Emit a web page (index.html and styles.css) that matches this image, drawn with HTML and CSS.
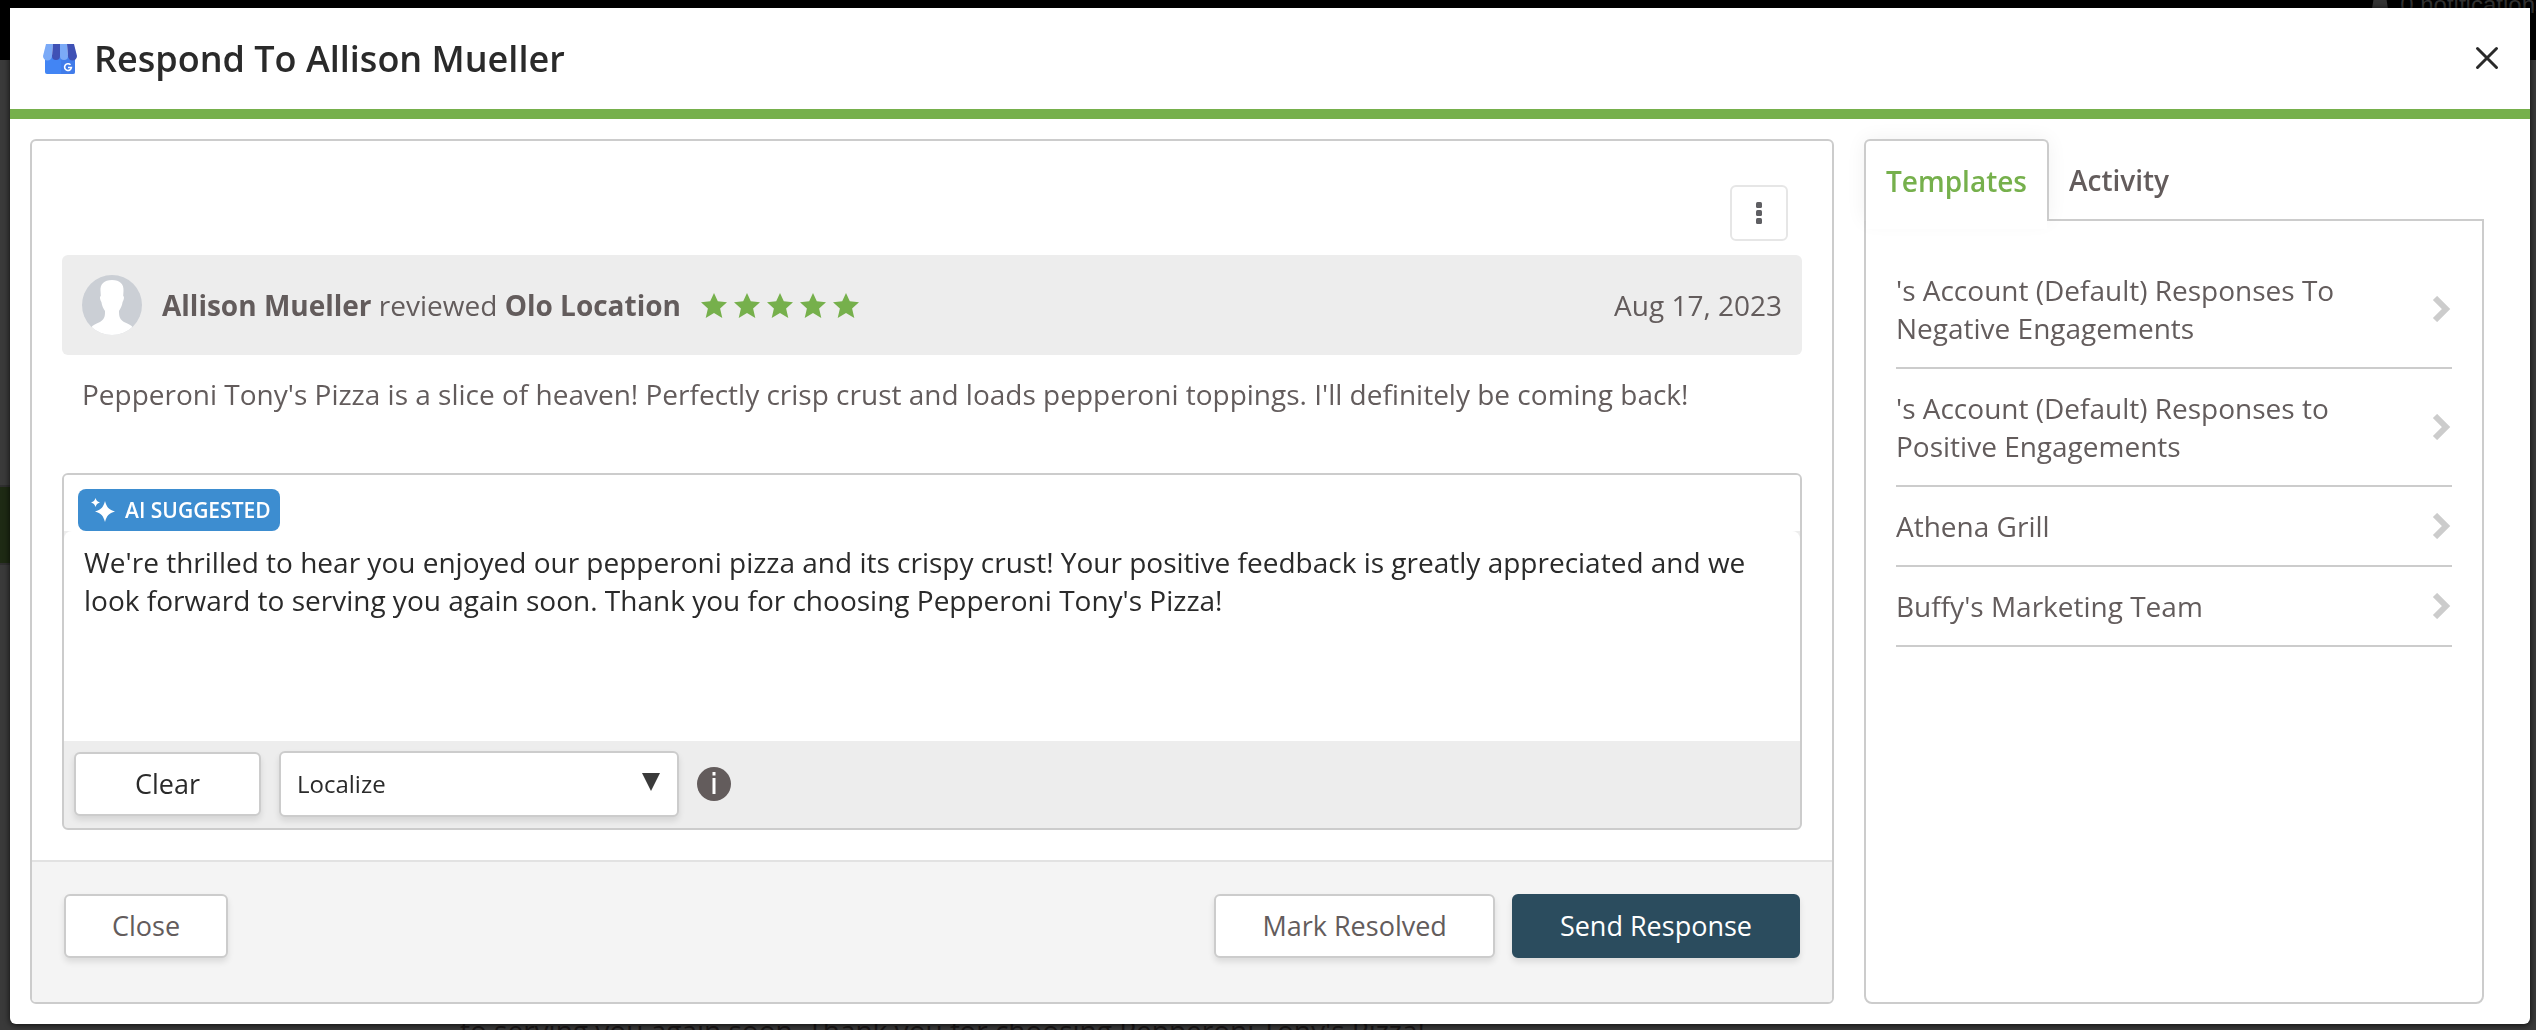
FILE: index.html
```html
<!DOCTYPE html>
<html lang="en">
<head>
<meta charset="utf-8">
<meta name="viewport" content="width=device-width, initial-scale=1">
<title>Respond To Allison Mueller</title>
<link rel="stylesheet" href="styles.css">
</head>
<body>
<div class="backdrop" aria-hidden="true">
  <div class="backdrop-bar"><svg class="bell" viewBox="0 0 18 16"><path d="M3 0h12l2 13H1z"/></svg><span>0 notifications</span></div>
  <div class="backdrop-accent"></div>
  <p class="backdrop-text">to serving you again soon. Thank you for choosing Pepperoni Tony's Pizza!</p>
</div>

<main class="modal" role="dialog" aria-labelledby="dialog-title">
  <header class="modal-header">
    <svg class="store-icon" viewBox="0 0 34 30" aria-hidden="true">
      <path fill="#4285f4" d="M2 11h30v17a2 2 0 0 1-2 2H4a2 2 0 0 1-2-2z"/>
      <path fill="#3f74e0" d="M18 15h14v13a2 2 0 0 1-2 2H18z" opacity=".5"/>
      <path fill="#7baaf7" d="M3 0h7L9 12a4.500 4.500 0 0 1-9 0z"/>
      <path fill="#3f51b5" d="M10 0h7v12a4 4 0 0 1-8 0z"/>
      <path fill="#7baaf7" d="M17 0h7l1 12a4 4 0 0 1-8 0z"/>
      <path fill="#3f51b5" d="M24 0h7l3 12a4.500 4.500 0 0 1-9 0z"/>
      <path fill="none" stroke="#fff" stroke-width="1.600" d="M27.500 20.800a3.400 3.400 0 1 0 .9 2.700H25"/>
    </svg>
    <h1 class="modal-title" id="dialog-title">Respond To Allison Mueller</h1>
    <button class="icon-close" type="button" aria-label="Close dialog">
      <svg viewBox="0 0 24 24" aria-hidden="true"><path d="M2.500 2.500l19 19M21.500 2.500l-19 19"/></svg>
    </button>
  </header>

  <div class="modal-body">
    <section class="review">
      <div class="review-main">
        <div class="review-tools">
          <button class="kebab" type="button" aria-label="More options">
            <svg viewBox="0 0 6 22" aria-hidden="true"><rect width="6" height="6" rx="1.500"/><rect y="8" width="6" height="6" rx="1.500"/><rect y="16" width="6" height="6" rx="1.500"/></svg>
          </button>
        </div>
        <div class="review-header">
          <svg class="avatar" viewBox="0 0 60 60" aria-hidden="true">
            <defs><clipPath id="round"><circle cx="30" cy="30" r="30"/></clipPath></defs>
            <g clip-path="url(#round)">
              <rect width="60" height="60" fill="#cbcfd5"/>
              <path fill="#fff" d="M30 5c8 0 12 4 11.500 11l-.3 5c1.200.3 1 3.500-.6 6-.6 4-2 6.500-3.600 9 0 6 1 8.500 5 11 4 2 7 3 9 5.500V60H9v-7.500c2-2.500 5-3.500 9-5.500 4-2.500 5.200-5 5-11-1.800-2.500-3-5-3.600-9-1.600-2.500-1.800-5.700-.6-6l-.3-5C18 9 22 5 30 5z"/>
            </g>
          </svg>
          <p class="byline"><strong>Allison Mueller</strong> reviewed <strong>Olo Location</strong></p>
          <div class="stars" role="img" aria-label="5 out of 5 stars">
            <svg viewBox="0 0 26 25"><path d="M13 0l3.800 8.300 9.200.9-6.900 6.300 2.200 9.500-8.300-5-8.300 5 2.200-9.500L0 9.200l9.200-.9z"/></svg>
            <svg viewBox="0 0 26 25"><path d="M13 0l3.800 8.300 9.200.9-6.900 6.300 2.200 9.500-8.300-5-8.300 5 2.200-9.500L0 9.200l9.200-.9z"/></svg>
            <svg viewBox="0 0 26 25"><path d="M13 0l3.800 8.300 9.200.9-6.900 6.300 2.200 9.500-8.300-5-8.300 5 2.200-9.500L0 9.200l9.200-.9z"/></svg>
            <svg viewBox="0 0 26 25"><path d="M13 0l3.800 8.300 9.200.9-6.900 6.300 2.200 9.500-8.300-5-8.300 5 2.200-9.500L0 9.200l9.200-.9z"/></svg>
            <svg viewBox="0 0 26 25"><path d="M13 0l3.800 8.300 9.200.9-6.900 6.300 2.200 9.500-8.300-5-8.300 5 2.200-9.500L0 9.200l9.200-.9z"/></svg>
          </div>
          <time class="date" datetime="2023-08-17">Aug 17, 2023</time>
        </div>
        <p class="review-text">Pepperoni Tony's Pizza is a slice of heaven! Perfectly crisp crust and loads pepperoni toppings. I'll definitely be coming back!</p>

        <div class="editor">
          <div class="editor-top">
            <span class="ai-badge">
              <svg viewBox="0 0 24 24" aria-hidden="true"><path d="M14 3c1.800 6.500 3.800 8.600 10 10.500C17.800 15.400 15.800 17.500 14 24c-1.800-6.500-3.800-8.600-10-10.500C10.200 11.600 12.200 9.500 14 3z"/><path d="M4.500 0c1 2.800 1.700 3.500 4.500 4.500C6.200 5.500 5.500 6.200 4.500 9 3.500 6.200 2.800 5.500 0 4.500 2.800 3.500 3.500 2.800 4.500 0z"/></svg>
              AI SUGGESTED
            </span>
          </div>
          <textarea class="reply" aria-label="Response" spellcheck="false">We're thrilled to hear you enjoyed our pepperoni pizza and its crispy crust! Your positive feedback is greatly appreciated and we look forward to serving you again soon. Thank you for choosing Pepperoni Tony's Pizza!</textarea>
          <div class="editor-bar">
            <button class="btn btn-clear" type="button">Clear</button>
            <div class="select-wrap">
              <select class="select" aria-label="Localize"><option>Localize</option></select>
              <svg class="caret" viewBox="0 0 18 18" aria-hidden="true"><path d="M0 0h18L9 18z"/></svg>
            </div>
            <svg class="info" viewBox="0 0 34 34" role="img" aria-label="Information"><circle cx="17" cy="17" r="17" fill="#635c5c"/><path fill="#fff" d="M15.500 5h3v3.500h-3zM15.500 11h3v16h-3z"/></svg>
          </div>
        </div>
      </div>
      <footer class="review-footer">
        <button class="btn btn-close" type="button">Close</button>
        <div class="footer-actions">
          <button class="btn" type="button">Mark Resolved</button>
          <button class="btn btn-primary" type="button">Send Response</button>
        </div>
      </footer>
    </section>

    <aside class="sidebar">
      <div class="tabs" role="tablist">
        <button class="tab tab-active" type="button" role="tab" aria-selected="true">Templates</button>
        <button class="tab" type="button" role="tab" aria-selected="false">Activity</button>
      </div>
      <div class="tab-panel" role="tabpanel">
        <ul class="templates">
          <li><a class="template" href="#negative"><span>'s Account (Default) Responses To Negative Engagements</span><svg class="chevron" viewBox="0 0 20 26" aria-hidden="true"><path d="M3 2l11 11L3 24"/></svg></a></li>
          <li><a class="template" href="#positive"><span>'s Account (Default) Responses to Positive Engagements</span><svg class="chevron" viewBox="0 0 20 26" aria-hidden="true"><path d="M3 2l11 11L3 24"/></svg></a></li>
          <li><a class="template" href="#athena"><span>Athena Grill</span><svg class="chevron" viewBox="0 0 20 26" aria-hidden="true"><path d="M3 2l11 11L3 24"/></svg></a></li>
          <li><a class="template" href="#buffy"><span>Buffy's Marketing Team</span><svg class="chevron" viewBox="0 0 20 26" aria-hidden="true"><path d="M3 2l11 11L3 24"/></svg></a></li>
        </ul>
      </div>
    </aside>
  </div>
</main>
</body>
</html>
```
FILE: styles.css
```css
* { box-sizing: border-box; }

body {
  margin: 0;
  min-height: 100vh;
  display: flex;
  padding: 8px 6px 6px 10px;
  background: #3a3a3a;
  color: #635c5c;
  font: 28px/38px "Open Sans", "Noto Sans", sans-serif;
}

h1, p, ul { margin: 0; padding: 0; }
ul { list-style: none; }
button, select, textarea { font: inherit; color: inherit; }
button { cursor: pointer; }

/* Dimmed page behind the dialog */
.backdrop {
  position: fixed;
  inset: 0;
  overflow: hidden;
  background: #3a3a3a;
}
.backdrop-bar {
  height: 60px;
  background: #000;
  color: #333;
}
.backdrop-bar span {
  position: absolute;
  top: -11px;
  right: -11px;
  font: 24px/32px "Liberation Sans", Arial, sans-serif;
}
.bell {
  position: absolute;
  top: -4px;
  right: 147px;
  width: 18px;
  height: 16px;
  fill: #333;
}
.backdrop-accent {
  position: absolute;
  top: 485px;
  left: 0;
  width: 10px;
  height: 80px;
  background: #1e2a14;
  border: solid #2f2f2f;
  border-width: 2px 0;
}
.backdrop-text {
  position: absolute;
  top: 1011px;
  left: 460px;
  white-space: nowrap;
  color: #1a1717;
}

.modal {
  position: relative;
  flex: 1;
  min-width: 0;
  display: flex;
  flex-direction: column;
  background: #fff;
  border-radius: 0 0 6px 6px;
  box-shadow: 0 1px 6px rgba(0, 0, 0, 0.8);
}

.modal-header {
  display: flex;
  align-items: center;
  gap: 17px;
  height: 111px;
  padding: 0 27px 0 33px;
  border-bottom: 10px solid #76b04c;
}
.store-icon { width: 34px; height: 30px; }
.modal-title {
  flex: 1;
  color: #2a2a2a;
  font-size: 36px;
  line-height: 50px;
  font-weight: 600;
}
.icon-close {
  display: flex;
  padding: 4px 4px 6px;
  border: 0;
  background: none;
}
.icon-close svg {
  width: 24px;
  height: 24px;
  fill: none;
  stroke: #2a2a2a;
  stroke-width: 3;
  stroke-linecap: round;
}

.modal-body {
  flex: 1;
  display: flex;
  gap: 30px;
  padding: 20px 46px 20px 20px;
}

.review {
  flex: 1;
  min-width: 0;
  display: flex;
  flex-direction: column;
  border: 2px solid #ccc;
  border-radius: 6px;
  overflow: hidden;
}
.review-main {
  flex: 1;
  display: flex;
  flex-direction: column;
  padding: 44px 30px 30px;
}
.review-tools {
  display: flex;
  justify-content: flex-end;
  padding: 0 14px 14px 0;
}
.kebab {
  display: flex;
  align-items: center;
  justify-content: center;
  width: 58px;
  height: 56px;
  padding: 0;
  background: #fff;
  border: 2px solid #e6e6e6;
  border-radius: 6px;
}
.kebab svg { width: 6px; height: 22px; fill: #5f5f63; }

.review-header {
  display: flex;
  align-items: center;
  gap: 20px;
  padding: 20px;
  background: #ededed;
  border-radius: 6px;
}
.avatar { width: 60px; height: 60px; }
.stars { display: flex; gap: 7px; }
.stars svg { width: 26px; height: 25px; fill: #76b04c; }
.date { margin-left: auto; }
.review-text { padding: 20px 20px 60px; }

.editor {
  flex: 1;
  display: flex;
  flex-direction: column;
  background: #ededed;
  border: 2px solid #ccc;
  border-radius: 6px;
  overflow: hidden;
}
.editor-top {
  display: flex;
  padding: 14px 14px 0;
  background: #fff;
}
.ai-badge {
  display: flex;
  align-items: center;
  gap: 10px;
  height: 42px;
  padding: 0 9px 0 13px;
  background: #3d8dd0;
  border-radius: 8px;
  color: #fff;
  font-size: 21px;
  line-height: 28px;
  font-weight: 600;
}
.ai-badge svg { width: 24px; height: 24px; fill: #fff; }
.reply {
  flex: 1;
  display: block;
  width: 100%;
  min-height: 210px;
  padding: 12px 20px;
  background: #fff;
  border: 0;
  border-radius: 8px 8px 0 0;
  color: #2a2a2a;
  resize: none;
  outline: none;
}
.editor-bar {
  display: flex;
  align-items: center;
  gap: 18px;
  padding: 10px 10px 11px;
}

.btn {
  height: 64px;
  padding: 0 46px;
  background: #fff;
  border: 2px solid #ccc;
  border-radius: 6px;
  box-shadow: 0 4px 6px rgba(0, 0, 0, 0.1);
  font-size: 27px;
  white-space: nowrap;
}
.btn-clear { width: 187px; color: #2a2a2a; }
.btn-primary {
  background: #2b4c5e;
  border-color: #2b4c5e;
  color: #fff;
}
.select-wrap { position: relative; width: 400px; }
.select {
  display: block;
  width: 100%;
  height: 66px;
  padding: 0 16px;
  appearance: none;
  background: #fff;
  border: 2px solid #ccc;
  border-radius: 6px;
  box-shadow: 0 4px 6px rgba(0, 0, 0, 0.1);
  color: #2a2a2a;
  font-size: 24px;
}
.caret {
  position: absolute;
  top: 22px;
  right: 19px;
  width: 18px;
  height: 18px;
  fill: #3a3a3a;
  pointer-events: none;
}
.info { width: 34px; height: 34px; }

.review-footer {
  display: flex;
  justify-content: space-between;
  padding: 32px 32px 44px;
  background: #f4f4f4;
  border-top: 2px solid #e2e2e2;
}
.footer-actions { display: flex; gap: 17px; }

.sidebar {
  flex: 0 0 620px;
  display: flex;
  flex-direction: column;
}
.tabs { display: flex; height: 80px; }
.tab {
  height: 82px;
  padding: 0 20px;
  background: none;
  border: 0;
  font-weight: 600;
}
.tab-active {
  position: relative;
  background: #fff;
  border: 2px solid #ccc;
  border-bottom: 0;
  border-radius: 6px 6px 0 0;
  box-shadow: 0 0 20px rgba(0, 0, 0, 0.06);
  color: #76b04c;
}
.tab-active::after {
  content: "";
  position: absolute;
  top: 100%;
  left: 0;
  right: 0;
  height: 8px;
  background: #fff;
}
.tab-panel {
  flex: 1;
  padding: 30px;
  border: 2px solid #ccc;
  border-radius: 0 0 8px 8px;
}
.template {
  display: flex;
  align-items: center;
  justify-content: space-between;
  gap: 60px;
  padding: 20px 0;
  border-bottom: 2px solid #ccc;
  color: inherit;
  text-decoration: none;
}
.chevron {
  flex: none;
  width: 20px;
  height: 26px;
  fill: none;
  stroke: #ccc;
  stroke-width: 6;
}
```
